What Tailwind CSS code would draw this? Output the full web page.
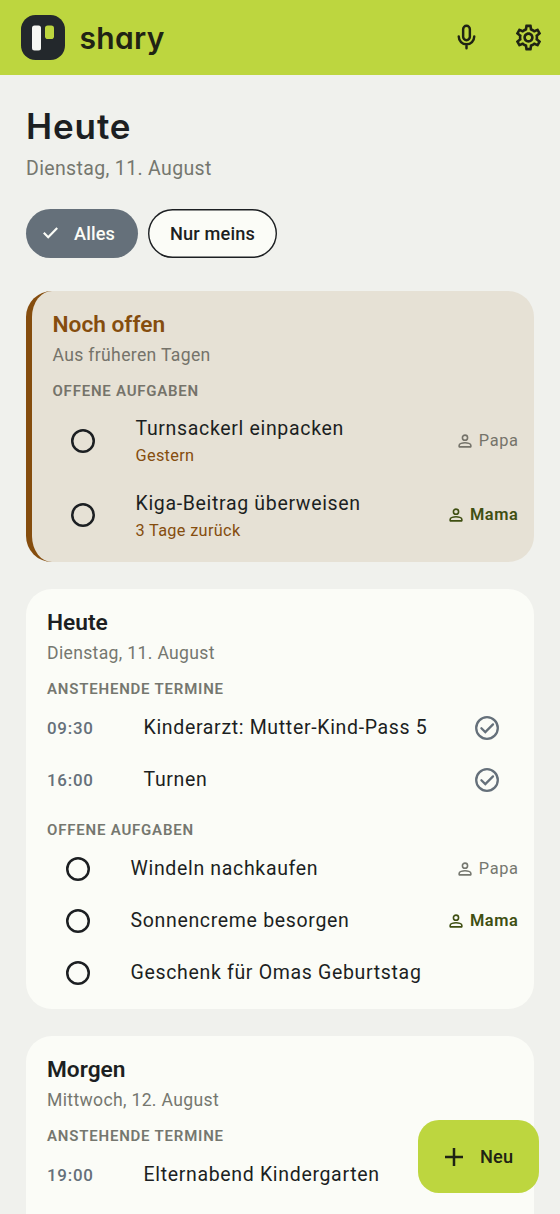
<!DOCTYPE html>
<html lang="de">
<head>
<meta charset="utf-8">
<title>shary</title>
<script src="https://cdn.jsdelivr.net/npm/@tailwindcss/browser@4"></script>
</head>
<body class="bg-[#f0f1ed]">
<svg class="hidden">
  <symbol id="person" viewBox="0 0 24 24"><g fill="none" stroke="currentColor" stroke-width="1.9" stroke-linejoin="round"><circle cx="12" cy="8" r="3.1"/><path d="M5 19v-2c0-1.7 4-3 7-3s7 1.300 7 3v2z"/></g></symbol>
  <symbol id="ring" viewBox="0 0 24 24"><circle cx="12" cy="12" r="10.750" fill="none" stroke="currentColor" stroke-width="2.500"/></symbol>
  <symbol id="done" viewBox="0 0 24 24"><g fill="none" stroke="currentColor" stroke-width="2.300"><circle cx="12" cy="12" r="10.800"/><path d="M6.400 12.200l3.900 3.900 7.700-7.700" stroke-linecap="round" stroke-linejoin="miter"/></g></symbol>
</svg>
<div class="relative h-[1214px] w-[560px] overflow-hidden font-['Roboto',sans-serif] text-[#1c1f22]">
  <header class="flex h-[75px] items-center bg-[#bdd63f] pl-[21px] pr-[16px] text-[#1f2314]">
    <svg class="h-[45px] w-[44px]" viewBox="0 0 44 45"><rect width="44" height="45" rx="14.500" fill="#23282c"/><rect x="11" y="10.500" width="9" height="25" rx="2.500" fill="#f6f7f3"/><rect x="24" y="10.500" width="9" height="13.500" rx="2.800" fill="#bdd63f"/></svg>
    <span class="ml-[14.500px] pt-px font-['Inter',sans-serif] text-[30px] leading-[36px] font-semibold tracking-[0.300px] [font-feature-settings:'cv11']">shary</span>
    <svg class="ml-auto size-[31px]" viewBox="0 0 24 24" fill="none" stroke="currentColor" stroke-width="1.900" stroke-linecap="round"><rect x="9.400" y="2.950" width="5.200" height="11.100" rx="2.600"/><path d="M6 11.300a6 6 0 0 0 12 0M12 17.300v3"/></svg>
    <svg class="ml-[31.500px] size-[31px]" viewBox="0 0 24 24" fill="currentColor"><path d="M19.430 12.980c.04-.32.07-.64.07-.98 0-.34-.03-.66-.07-.98l2.110-1.650c.19-.15.24-.42.12-.64l-2-3.460c-.09-.16-.26-.25-.44-.25-.06 0-.12.01-.17.03l-2.490 1c-.52-.4-1.080-.73-1.690-.98l-.38-2.650C14.460 2.180 14.250 2 14 2h-4c-.25 0-.46.18-.49.42l-.38 2.650c-.61.25-1.170.59-1.690.98l-2.490-1c-.06-.02-.12-.03-.18-.03-.17 0-.34.09-.43.25l-2 3.460c-.13.22-.07.49.12.64l2.110 1.650c-.04.32-.07.65-.07.98 0 .33.03.66.07.98l-2.110 1.650c-.19.15-.24.42-.12.64l2 3.460c.09.16.26.25.44.25.06 0 .12-.01.17-.03l2.490-1c.52.4 1.080.73 1.690.98l.38 2.650c.03.24.24.42.49.42h4c.25 0 .46-.18.49-.42l.38-2.650c.61-.25 1.170-.59 1.690-.98l2.490 1c.06.02.12.03.18.03.17 0 .34-.09.43-.25l2-3.460c.12-.22.07-.49-.12-.64l-2.110-1.650zm-1.980-1.710c.04.31.05.52.05.73 0 .21-.02.43-.05.73l-.14 1.130.89.7 1.080.84-.7 1.210-1.270-.51-1.040-.42-.9.68c-.43.32-.84.56-1.250.73l-1.060.43-.16 1.130-.2 1.350h-1.400l-.19-1.350-.16-1.130-1.060-.43c-.43-.18-.83-.41-1.230-.71l-.91-.7-1.060.43-1.270.51-.7-1.210 1.080-.84.89-.7-.14-1.130c-.03-.31-.05-.54-.05-.74s.02-.43.05-.73l.14-1.130-.89-.7-1.080-.84.7-1.210 1.270.51 1.040.42.9-.68c.43-.32.84-.56 1.250-.73l1.060-.43.16-1.130.2-1.350h1.390l.19 1.350.16 1.130 1.060.43c.43.18.83.41 1.230.71l.91.7 1.060-.43 1.270-.51.7 1.210-1.070.85-.89.7.14 1.130zM12 8c-2.210 0-4 1.790-4 4s1.790 4 4 4 4-1.790 4-4-1.790-4-4-4zm0 6c-1.100 0-2-.9-2-2s.9-2 2-2 2 .9 2 2-.9 2-2 2z"/></svg>
  </header>

  <main class="px-[26px] pt-[29px]">
    <h1 class="font-['Inter',sans-serif] text-[35px] leading-[44px] font-semibold tracking-[0.900px]">Heute</h1>
    <p class="mt-[7px] text-[19.500px] leading-[28px] tracking-[0.350px] text-[#75776f]">Dienstag, 11. August</p>

    <div class="mt-[25.500px] flex gap-[10.500px]">
      <button class="flex h-[49px] w-[111.500px] items-center rounded-full bg-[#65707a] text-[18.200px] font-medium tracking-[0.130px] text-[#fbfcf7]">
        <svg class="ml-[17px] h-[14px] w-[15px]" viewBox="0 0 15 14" fill="none" stroke="currentColor" stroke-width="2.200"><path d="M0.800 6.800l4.400 4.400L14.200 2"/></svg>
        <span class="ml-[16px] pt-px">Alles</span>
      </button>
      <button class="flex h-[49px] w-[129px] items-center justify-center rounded-full bg-[#fbfcf7] pt-px text-[18.200px] font-medium tracking-[0.130px] shadow-[inset_0_0_0_1.400px_#1c1f22]">Nur meins</button>
    </div>

    <section class="mt-[33px] h-[271.500px] w-[508px] rounded-[26px] border-l-[6px] border-[#854d0e] bg-[#e6e1d5] pt-[19px] pr-[15.500px] pl-[20.500px]">
      <h2 class="text-[22.700px] leading-[29px] font-semibold text-[#854d0e]">Noch offen</h2>
      <p class="mt-px text-[17.600px] leading-[30px] tracking-[0.330px] text-[#75736a]">Aus früheren Tagen</p>
      <h3 class="flex h-[34px] items-center pt-[9px] text-[15px] font-semibold tracking-[0.770px] text-[#75736a]">OFFENE AUFGABEN</h3>
      <ul>
        <li class="flex h-[74.400px] items-center">
          <svg class="ml-[18.500px] size-6"><use href="#ring"/></svg>
          <div class="ml-[40.500px] pt-[2px]"><div class="text-[19.500px] leading-[27px] tracking-[0.670px]">Turnsackerl einpacken</div><div class="text-[16.300px] leading-[27px] tracking-[0.330px] text-[#854d0e]">Gestern</div></div>
          <div class="ml-auto flex items-center gap-[4px] text-[16.400px] tracking-[0.600px] text-[#75736a]"><svg class="size-5"><use href="#person"/></svg><span class="pt-px">Papa</span></div>
        </li>
        <li class="flex h-[74.400px] items-center">
          <svg class="ml-[18.500px] size-6"><use href="#ring"/></svg>
          <div class="ml-[40.500px] pt-[3px]"><div class="text-[19.500px] leading-[27px] tracking-[0.670px]">Kiga-Beitrag überweisen</div><div class="text-[16.300px] leading-[27px] tracking-[0.330px] text-[#854d0e]">3 Tage zurück</div></div>
          <div class="ml-auto flex items-center gap-[4px] text-[16.400px] font-semibold tracking-[0.600px] text-[#3f4f12]"><svg class="size-5"><use href="#person"/></svg><span class="pt-px">Mama</span></div>
        </li>
      </ul>
    </section>

    <section class="mt-[27px] h-[419.500px] w-[508px] rounded-[26px] bg-[#fbfcf7] pt-[19px] pr-[15.500px] pl-[21px]">
      <h2 class="text-[22.700px] leading-[29px] font-semibold">Heute</h2>
      <p class="mt-px text-[17.600px] leading-[30px] tracking-[0.330px] text-[#75776f]">Dienstag, 11. August</p>
      <h3 class="flex h-[34px] items-center pt-[9px] text-[15px] font-semibold tracking-[0.800px] text-[#75776f]">ANSTEHENDE TERMINE</h3>
      <ul>
        <li class="flex h-[52px] items-center pr-[19.500px]">
          <span class="w-[96.500px] pt-[2px] text-[16.900px] font-medium tracking-[0.750px] text-[#65707a]">09:30</span>
          <span class="text-[19.500px] tracking-[0.670px]">Kinderarzt: Mutter-Kind-Pass 5</span>
          <svg class="ml-auto size-6 text-[#65707a]"><use href="#done"/></svg>
        </li>
        <li class="flex h-[52px] items-center pr-[19.500px]">
          <span class="w-[96.500px] pt-[2px] text-[16.900px] font-medium tracking-[0.750px] text-[#65707a]">16:00</span>
          <span class="text-[19.500px] tracking-[0.670px]">Turnen</span>
          <svg class="ml-auto size-6 text-[#65707a]"><use href="#done"/></svg>
        </li>
      </ul>
      <h3 class="flex h-[37px] items-center pt-[12px] text-[15px] font-semibold tracking-[0.800px] text-[#75776f]">OFFENE AUFGABEN</h3>
      <ul>
        <li class="flex h-[52px] items-center">
          <svg class="ml-[19px] size-6"><use href="#ring"/></svg>
          <span class="ml-[40.500px] text-[19.500px] tracking-[0.670px]">Windeln nachkaufen</span>
          <div class="ml-auto flex items-center gap-[4px] text-[16.400px] tracking-[0.600px] text-[#75776f]"><svg class="size-5"><use href="#person"/></svg>Papa</div>
        </li>
        <li class="flex h-[52px] items-center">
          <svg class="ml-[19px] size-6"><use href="#ring"/></svg>
          <span class="ml-[40.500px] text-[19.500px] tracking-[0.670px]">Sonnencreme besorgen</span>
          <div class="ml-auto flex items-center gap-[4px] text-[16.400px] font-semibold tracking-[0.600px] text-[#3f4f12]"><svg class="size-5"><use href="#person"/></svg>Mama</div>
        </li>
        <li class="flex h-[52px] items-center">
          <svg class="ml-[19px] size-6"><use href="#ring"/></svg>
          <span class="ml-[40.500px] text-[19.500px] tracking-[0.670px]">Geschenk für Omas Geburtstag</span>
        </li>
      </ul>
    </section>

    <section class="mt-[27px] h-[300px] w-[508px] rounded-[26px] bg-[#fbfcf7] pt-[19px] pr-[15.500px] pl-[21px]">
      <h2 class="text-[22.700px] leading-[29px] font-semibold">Morgen</h2>
      <p class="mt-px text-[17.600px] leading-[30px] tracking-[0.330px] text-[#75776f]">Mittwoch, 12. August</p>
      <h3 class="flex h-[34px] items-center pt-[9px] text-[15px] font-semibold tracking-[0.800px] text-[#75776f]">ANSTEHENDE TERMINE</h3>
      <div class="flex h-[52px] items-center">
        <span class="w-[96.500px] pt-[2px] text-[16.900px] font-medium tracking-[0.750px] text-[#65707a]">19:00</span>
        <span class="text-[19.500px] tracking-[0.670px]">Elternabend Kindergarten</span>
      </div>
    </section>
  </main>

  <button class="absolute right-[21px] bottom-[21px] flex h-[73px] w-[121.500px] items-center rounded-[21px] bg-[#bdd63f] pl-[27px] text-[18.200px] font-medium tracking-[0.130px] text-[#1f2314]">
    <svg class="size-[18px]" viewBox="0 0 18 18" stroke="currentColor" stroke-width="2.500"><path d="M9 0v18M0 9h18"/></svg>
    <span class="ml-[17.500px]">Neu</span>
  </button>
</div>
</body>
</html>
